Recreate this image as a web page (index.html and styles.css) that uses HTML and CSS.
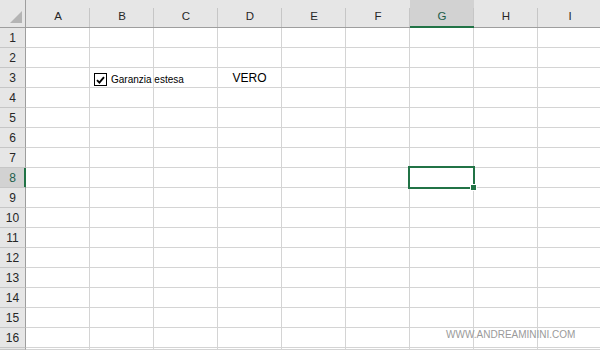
FILE: index.html
```html
<!DOCTYPE html>
<html>
<head>
<meta charset="utf-8">
<link rel="stylesheet" href="styles.css">
</head>
<body>
<div class="sheet">
  <div class="corner"><span class="tri"></span></div>
  <div class="ch">A</div><div class="ch">B</div><div class="ch">C</div><div class="ch">D</div><div class="ch">E</div><div class="ch">F</div><div class="ch ch-sel">G</div><div class="ch">H</div><div class="ch">I</div>

  <div class="rh">1</div><div class="c"></div><div class="c"></div><div class="c"></div><div class="c"></div><div class="c"></div><div class="c"></div><div class="c"></div><div class="c"></div><div class="c"></div>
  <div class="rh">2</div><div class="c"></div><div class="c"></div><div class="c"></div><div class="c"></div><div class="c"></div><div class="c"></div><div class="c"></div><div class="c"></div><div class="c"></div>
  <div class="rh">3</div><div class="c"></div>
  <div class="c c-ctrl"><span class="cb"><svg width="9" height="8" viewBox="0 0 9 8"><path d="M1 4.2 L3.4 6.6 L8 1.2" fill="none" stroke="#000" stroke-width="1.9"/></svg></span><span class="cb-label">Garanzia estesa</span></div>
  <div class="c"></div><div class="c c-val">VERO</div><div class="c"></div><div class="c"></div><div class="c"></div><div class="c"></div><div class="c"></div>
  <div class="rh">4</div><div class="c"></div><div class="c"></div><div class="c"></div><div class="c"></div><div class="c"></div><div class="c"></div><div class="c"></div><div class="c"></div><div class="c"></div>
  <div class="rh">5</div><div class="c"></div><div class="c"></div><div class="c"></div><div class="c"></div><div class="c"></div><div class="c"></div><div class="c"></div><div class="c"></div><div class="c"></div>
  <div class="rh">6</div><div class="c"></div><div class="c"></div><div class="c"></div><div class="c"></div><div class="c"></div><div class="c"></div><div class="c"></div><div class="c"></div><div class="c"></div>
  <div class="rh">7</div><div class="c"></div><div class="c"></div><div class="c"></div><div class="c"></div><div class="c"></div><div class="c"></div><div class="c"></div><div class="c"></div><div class="c"></div>
  <div class="rh rh-sel">8</div><div class="c"></div><div class="c"></div><div class="c"></div><div class="c"></div><div class="c"></div><div class="c"></div><div class="c c-active"><span class="handle"></span></div><div class="c"></div><div class="c"></div>
  <div class="rh">9</div><div class="c"></div><div class="c"></div><div class="c"></div><div class="c"></div><div class="c"></div><div class="c"></div><div class="c"></div><div class="c"></div><div class="c"></div>
  <div class="rh">10</div><div class="c"></div><div class="c"></div><div class="c"></div><div class="c"></div><div class="c"></div><div class="c"></div><div class="c"></div><div class="c"></div><div class="c"></div>
  <div class="rh">11</div><div class="c"></div><div class="c"></div><div class="c"></div><div class="c"></div><div class="c"></div><div class="c"></div><div class="c"></div><div class="c"></div><div class="c"></div>
  <div class="rh">12</div><div class="c"></div><div class="c"></div><div class="c"></div><div class="c"></div><div class="c"></div><div class="c"></div><div class="c"></div><div class="c"></div><div class="c"></div>
  <div class="rh">13</div><div class="c"></div><div class="c"></div><div class="c"></div><div class="c"></div><div class="c"></div><div class="c"></div><div class="c"></div><div class="c"></div><div class="c"></div>
  <div class="rh">14</div><div class="c"></div><div class="c"></div><div class="c"></div><div class="c"></div><div class="c"></div><div class="c"></div><div class="c"></div><div class="c"></div><div class="c"></div>
  <div class="rh">15</div><div class="c"></div><div class="c"></div><div class="c"></div><div class="c"></div><div class="c"></div><div class="c"></div><div class="c"></div><div class="c"></div><div class="c"></div>
  <div class="rh">16</div><div class="c"></div><div class="c"></div><div class="c"></div><div class="c"></div><div class="c"></div><div class="c"></div><div class="c"></div><div class="c"></div><div class="c"></div>
  <div class="rh"></div><div class="c"></div><div class="c"></div><div class="c"></div><div class="c"></div><div class="c"></div><div class="c"></div><div class="c"></div><div class="c"></div><div class="c"></div>
</div>
<div class="watermark">WWW.ANDREAMININI.COM</div>
</body>
</html>
```

FILE: styles.css
```css
html, body {
  margin: 0;
  padding: 0;
  width: 600px;
  height: 350px;
  overflow: hidden;
  background: #fff;
  font-family: "Liberation Sans", Arial, sans-serif;
}

body {
  position: relative;
}

.sheet {
  display: grid;
  grid-template-columns: 26px repeat(9, 64px);
  grid-template-rows: 28px repeat(16, 20px) 2px;
  width: 600px;
  height: 350px;
  overflow: hidden;
}

.sheet > div {
  box-sizing: border-box;
}

.corner {
  background: #e6e6e6;
  border-right: 1px solid #9e9e9e;
  border-bottom: 1px solid #9e9e9e;
  display: flex;
  justify-content: flex-end;
  align-items: flex-end;
  padding: 0 3px 4px 0;
}

.tri {
  width: 0;
  height: 0;
  border-left: 12px solid transparent;
  border-bottom: 12px solid #b4b4b4;
}

.ch {
  background: linear-gradient(#c6c6c6, #c6c6c6) no-repeat right bottom / 1px 19px, #e6e6e6;
  border-bottom: 1px solid #9e9e9e;
  display: flex;
  justify-content: center;
  align-items: center;
  padding-top: 5px;
  font-size: 11.5px;
  color: #262626;
}

.ch-sel {
  background: linear-gradient(#c6c6c6, #c6c6c6) no-repeat right bottom / 1px 19px, #d2d2d2;
  border-bottom-color: #217346;
  box-shadow: inset 0 -1px 0 #217346;
  color: #1e5e4a;
}

.rh {
  background: #e6e6e6;
  border-right: 1px solid #9e9e9e;
  border-bottom: 1px solid #c6c6c6;
  display: flex;
  justify-content: center;
  align-items: center;
  font-size: 12px;
  color: #262626;
}

.rh-sel {
  background: #d2d2d2;
  border-right-color: #217346;
  box-shadow: inset -1px 0 0 #217346;
  color: #1e5e4a;
}

.c {
  border-right: 1px solid #d4d4d4;
  border-bottom: 1px solid #d4d4d4;
}

.c-ctrl {
  display: flex;
  align-items: flex-end;
  padding: 0 0 1px 4px;
  white-space: nowrap;
  overflow: visible;
  position: relative;
  z-index: 1;
}

.cb {
  box-sizing: border-box;
  width: 13px;
  height: 13px;
  border: 1px solid #000;
  background: #fff;
  display: flex;
  align-items: center;
  justify-content: center;
  flex: none;
}

.cb-label {
  margin-left: 4px;
  font-size: 10px;
  line-height: 12px;
  color: #000;
}

.c-val {
  display: flex;
  justify-content: center;
  align-items: center;
  padding-top: 1px;
  font-size: 12px;
  color: #000;
}

.c-active {
  position: relative;
}

.c-active::after {
  content: "";
  position: absolute;
  top: -2px;
  left: -2px;
  right: -2px;
  bottom: -2px;
  border: 2px solid #217346;
}

.handle {
  position: absolute;
  right: -4px;
  bottom: -4px;
  width: 5px;
  height: 5px;
  background: #217346;
  border: 1px solid #fff;
  z-index: 2;
}

.watermark {
  position: absolute;
  left: 446px;
  top: 329px;
  font-size: 10px;
  color: #9a9a9a;
}
```
